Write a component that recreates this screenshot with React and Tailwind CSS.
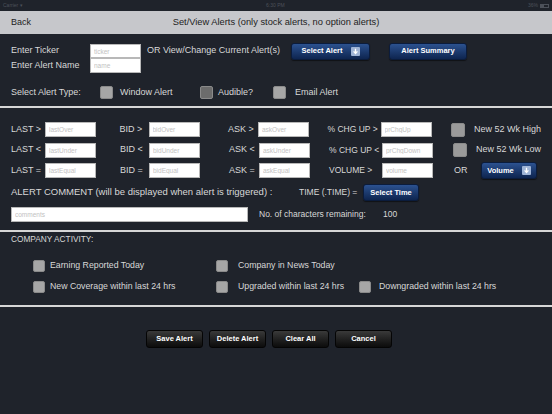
import React from "react";

const font = "font-['Liberation_Sans',Arial,sans-serif]";
const inputClass =
  "h-full w-[51px] bg-white border border-[#b8b8b8] px-[3px] text-[6.5px] text-[#333] placeholder-[#c2c2c2] outline-none";
const blueBtn =
  "flex items-center justify-center gap-[8px] rounded-[3px] border border-[#0b1c3c] bg-gradient-to-b from-[#2c5290] to-[#0e2550] text-[7.5px] font-bold text-white shadow-[0_1px_1px_rgba(0,0,0,0.5)]";
const blackBtn =
  "w-[57px] h-[18px] flex items-center justify-center rounded-[3px] border border-[#050505] bg-gradient-to-b from-[#3a3a3a] to-[#0c0c0c] text-[7.5px] font-bold text-white";

const DownIcon = () => (
  <svg width="9" height="9" viewBox="0 0 9 9">
    <rect x="0" y="0" width="9" height="9" rx="1" fill="#9fb4d6" />
    <path d="M4.5 1.8v4M2.6 4.4l1.9 2.2 1.9-2.2" stroke="#fff" strokeWidth="1.3" fill="none" />
  </svg>
);

const Box = ({ c = "bg-[#a6a6a6]", size = "w-[13px] h-[13px]" }) => (
  <span className={`inline-block shrink-0 ${size} rounded-[2px] ${c} border border-[#8a8a8a]`} />
);

const Cell = ({ label, lw, w, ph, ts = "text-[9px]" }) => (
  <div className={`flex items-center h-full ${w}`}>
    <span className={`${lw} ${ts} whitespace-nowrap`}>{label}</span>
    <input className={inputClass} placeholder={ph} />
  </div>
);

const PriceRow = ({ sign, suffix, c4, p4, last }) => (
  <div className="flex items-center h-[15px]">
    <Cell label={`LAST ${sign}`} lw="w-[34px]" w="w-[109px]" ph={`last${suffix}`} />
    <Cell label={`BID ${sign}`} lw="w-[29px]" w="w-[109px]" ph={`bid${suffix}`} />
    <Cell label={`ASK ${sign}`} lw="w-[30px]" w="w-[100px]" ph={`ask${suffix}`} />
    <Cell label={c4} lw="w-[53px]" w="w-[124px]" ph={p4} ts="text-[8.5px]" />
    {last}
  </div>
);

const Check = ({ label, w, gap }) => (
  <div className={`flex items-center ${w}`}>
    <Box size="w-[12px] h-[12px]" />
    <span className={`${gap} whitespace-nowrap`}>{label}</span>
  </div>
);

export default function App() {
  return (
    <div className={`${font} w-[552px] h-[414px] bg-[#1f232b] text-[#d8d8d8] text-[9px] overflow-hidden`}>
      {/* status bar */}
      <div className="h-[11px] flex items-center justify-between px-[3px] text-[5px] text-[#4c515a]">
        <span>Carrier ▾</span>
        <span>6:30 PM</span>
        <span className="flex items-center gap-[2px]">
          36%
          <span className="inline-block w-[9px] h-[4px] border border-[#4c515a]">
            <span className="block w-[3px] h-full bg-[#4c515a]" />
          </span>
        </span>
      </div>

      {/* nav bar */}
      <div className="relative h-[23px] bg-[#c6c7cb] flex items-center text-[#222] text-[9px]">
        <span className="ml-[11px]">Back</span>
        <span className="absolute left-0 right-0 text-center text-[9.3px] pointer-events-none">
          Set/View Alerts (only stock alerts, no option alerts)
        </span>
      </div>

      <div className="px-[11px]">
        <div className="mt-[10px] h-[14px] flex items-center">
          <span className="w-[79px]">Enter Ticker</span>
          <input className={inputClass} placeholder="ticker" />
          <span className="ml-[6px] w-[144px] whitespace-nowrap">OR View/Change Current Alert(s)</span>
          <button className={`${blueBtn} w-[79px] h-[17px]`}>
            Select Alert <DownIcon />
          </button>
          <button className={`${blueBtn} ml-[19px] w-[78px] h-[17px]`}>Alert Summary</button>
        </div>
        <div className="h-[15px] flex items-center">
          <span className="w-[79px]">Enter Alert Name</span>
          <input className={inputClass} placeholder="name" />
        </div>

        <div className="mt-[13px] h-[13px] flex items-center">
          <span className="w-[89px]">Select Alert Type:</span>
          <div className="flex items-center w-[100px]">
            <Box />
            <span className="ml-[7px]">Window Alert</span>
          </div>
          <div className="flex items-center w-[73px]">
            <Box c="bg-[#6c6c6c]" />
            <span className="ml-[5px]">Audible?</span>
          </div>
          <div className="flex items-center">
            <Box />
            <span className="ml-[9px]">Email Alert</span>
          </div>
        </div>
      </div>

      <div className="mt-[7px] h-[1.5px] bg-[#d6d6d6]" />

      <div className="px-[11px] mt-[14.5px] flex flex-col gap-[5.5px]">
        <PriceRow
          sign=">"
          suffix="Over"
          c4="% CHG UP >"
          p4="prChgUp"
          last={
            <div className="flex items-center">
              <Box c="bg-[#9a9a9a]" size="w-[14px] h-[14px]" />
              <span className="ml-[9px] whitespace-nowrap">New 52 Wk High</span>
            </div>
          }
        />
        <PriceRow
          sign="<"
          suffix="Under"
          c4="% CHG UP <"
          p4="prChgDown"
          last={
            <div className="flex items-center">
              <Box c="bg-[#9a9a9a]" size="w-[14px] h-[14px]" />
              <span className="ml-[9px] whitespace-nowrap">New 52 Wk Low</span>
            </div>
          }
        />
        <PriceRow
          sign="="
          suffix="Equal"
          c4="VOLUME >"
          p4="volume"
          last={
            <div className="flex items-center">
              <span className="w-[28px] pl-[1px]">OR</span>
              <button className={`${blueBtn} w-[56px] h-[17px]`}>
                Volume <DownIcon />
              </button>
            </div>
          }
        />

        <div className="mt-[0.5px] h-[17px] flex items-center">
          <span className="w-[288px] text-[9.5px] whitespace-nowrap">ALERT COMMENT (will be displayed when alert is triggered) :</span>
          <span className="w-[64px] text-[8.5px] whitespace-nowrap">TIME (.TIME) =</span>
          <button className={`${blueBtn} w-[56px] h-[17px]`}>Select Time</button>
        </div>

        <div className="mt-[0.5px] h-[15px] flex items-center text-[8.5px]">
          <input className={`${inputClass} w-[237px]`} placeholder="comments" />
          <span className="ml-[11px] w-[124px]">No. of characters remaining:</span>
          <span>100</span>
        </div>
      </div>

      <div className="mt-[8px] h-[1.5px] bg-[#d6d6d6]" />

      <div className="px-[11px] text-[8.75px]">
        <div className="mt-[1.5px] h-[12px] flex items-center text-[8.3px]">COMPANY ACTIVITY:</div>
        <div className="mt-[15px] pl-[22px] flex items-center h-[12px]">
          <Check w="w-[183px]" gap="ml-[5px]" label="Earning Reported Today" />
          <Check w="w-[143px]" gap="ml-[10px]" label="Company in News Today" />
        </div>
        <div className="mt-[9px] pl-[22px] flex items-center h-[12px]">
          <Check w="w-[183px]" gap="ml-[5px]" label="New Coverage within last 24 hrs" />
          <Check w="w-[143px]" gap="ml-[10px]" label="Upgraded within last 24 hrs" />
          <Check gap="ml-[8px]" label="Downgraded within last 24 hrs" />
        </div>
      </div>

      <div className="mt-[12px] h-[1.5px] bg-[#d6d6d6]" />

      <div className="mt-[23.5px] ml-[146px] flex gap-[6px]">
        <button className={blackBtn}>Save Alert</button>
        <button className={blackBtn}>Delete Alert</button>
        <button className={blackBtn}>Clear All</button>
        <button className={blackBtn}>Cancel</button>
      </div>
    </div>
  );
}
